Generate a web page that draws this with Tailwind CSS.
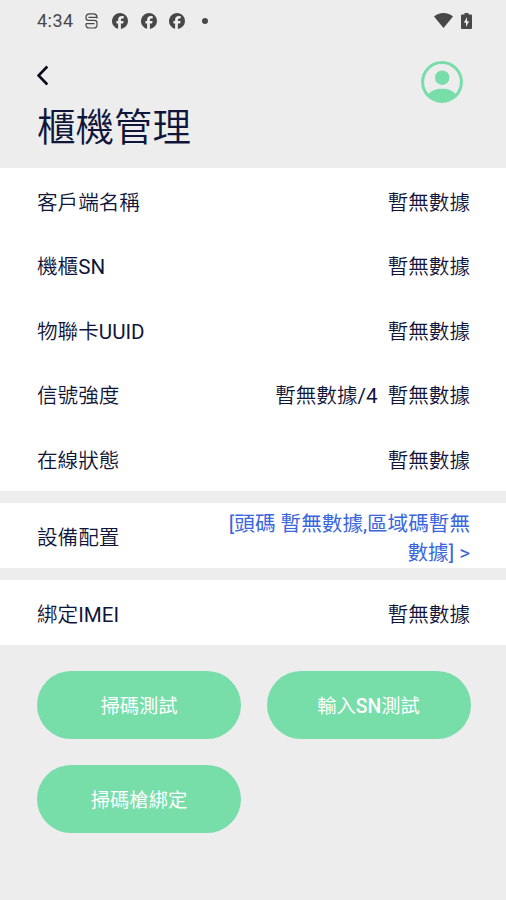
<!DOCTYPE html>
<html lang="zh">
<head>
  <meta charset="UTF-8">
  <meta name="viewport" content="width=device-width, initial-scale=1.0">
  <title>櫃機管理</title>
  <script src="https://cdn.jsdelivr.net/npm/@tailwindcss/browser@4"></script>
</head>
<body class="h-[900px] overflow-hidden bg-[#ededed] font-[Roboto,'Noto_Sans_CJK_SC',sans-serif] text-[20.6px] text-[#10153a]">

  <!-- Status bar -->
  <div class="flex h-[41px] items-center justify-between pl-[37px] pr-[34px] text-[#484848]">
    <div class="flex items-center">
      <span class="w-[48px] text-[18px] leading-none tracking-[0.5px]">4:34</span>
      <svg class="h-4 w-[13px]" viewBox="0 0 13 16" fill="none" stroke="currentColor" stroke-width="1.2">
        <path d="M12 5.500V4A3.300 3.300 0 0 0 8.700.9H4.300A3.300 3.300 0 0 0 1 4v.7a2.600 2.600 0 0 0 2.600 2.600h5.800A2.600 2.600 0 0 1 12 9.900v1.800a3.300 3.300 0 0 1-3.300 3.300H4.300A3.300 3.300 0 0 1 1 11.700V10.500" />
        <path d="M3.500 4.300h8.500M1 10.700h8.500" />
      </svg>
      <div class="ml-[14px] flex gap-[12.500px]">
        <svg class="size-4" viewBox="0 0 16 16" fill="currentColor"><path d="M16 8a8 8 0 1 0-9.900 7.800v-5.300H4.400V8h1.700V6.900c0-2.700 1.200-4 3.900-4 .5 0 1.400.1 1.700.2v2.300h-1c-1.300 0-1.800.5-1.800 1.800V8h2.700l-.5 2.500H8.900v5.400A8 8 0 0 0 16 8z" /></svg>
        <svg class="size-4" viewBox="0 0 16 16" fill="currentColor"><path d="M16 8a8 8 0 1 0-9.900 7.800v-5.300H4.400V8h1.700V6.900c0-2.700 1.200-4 3.900-4 .5 0 1.400.1 1.700.2v2.300h-1c-1.300 0-1.800.5-1.800 1.800V8h2.700l-.5 2.500H8.900v5.400A8 8 0 0 0 16 8z" /></svg>
        <svg class="size-4" viewBox="0 0 16 16" fill="currentColor"><path d="M16 8a8 8 0 1 0-9.900 7.800v-5.300H4.400V8h1.700V6.900c0-2.700 1.200-4 3.900-4 .5 0 1.400.1 1.700.2v2.300h-1c-1.300 0-1.800.5-1.800 1.800V8h2.700l-.5 2.500H8.900v5.400A8 8 0 0 0 16 8z" /></svg>
      </div>
      <span class="ml-[17px] size-[6px] rounded-full bg-[#484848]"></span>
    </div>
    <div class="flex items-center gap-[8px]">
      <svg class="h-[15px] w-[19px]" viewBox="0 0 19 15" fill="currentColor"><path d="M9.500 15 0 3.600C2.400 1.400 5.800 0 9.500 0S16.600 1.400 19 3.600z" /></svg>
      <svg class="h-4 w-[11px]" viewBox="0 0 11 16" fill="currentColor"><path fill-rule="evenodd" d="M3.500 0h4v1.500H10a1 1 0 0 1 1 1V15a1 1 0 0 1-1 1H1a1 1 0 0 1-1-1V2.500a1 1 0 0 1 1-1h2.500zM6 4 2.900 9.700H5V14l3.100-5.700H6z" /></svg>
    </div>
  </div>

  <!-- Header -->
  <header class="flex h-[127px] justify-between pl-[37px] pr-[43px]">
    <div>
      <svg class="mt-[24px] h-[21px] w-[12px]" viewBox="0 0 12 21" fill="none" stroke="#080a1a" stroke-width="2.600"><path d="M10.300 1.500 1.600 10.500l8.700 9" /></svg>
      <h1 class="mt-[15px] text-[38.500px] font-[350] leading-[54px]">櫃機管理</h1>
    </div>
    <svg class="mt-[20px] size-[42px]" viewBox="0 0 42 42" fill="#77dda9">
      <circle cx="21" cy="21" r="19.400" fill="none" stroke="#77dda9" stroke-width="3" />
      <circle cx="21.200" cy="16.700" r="7.200" />
      <path d="M7 33.500C10 29.600 15 27.700 21 27.700s11 1.900 14 5.800A19.400 19.400 0 0 1 7 33.500z" />
    </svg>
  </header>

  <!-- Cabinet details -->
  <section class="bg-white font-[350]">
    <div class="flex h-[64.500px] items-center justify-between pl-[37px] pr-[36px] pt-[6px]"><span>客戶端名稱</span><span>暫無數據</span></div>
    <div class="flex h-[64.500px] items-center justify-between pl-[37px] pr-[36px] pt-[6px]"><span>機櫃<span class="font-normal">SN</span></span><span>暫無數據</span></div>
    <div class="flex h-[64.500px] items-center justify-between pl-[37px] pr-[36px] pt-[6px]"><span>物聯卡<span class="font-normal">UUID</span></span><span>暫無數據</span></div>
    <div class="flex h-[64.500px] items-center justify-between pl-[37px] pr-[36px] pt-[6px]">
      <span>信號強度</span>
      <span class="flex gap-[10px]"><span>暫無數據<span class="font-normal">/4</span></span><span>暫無數據</span></span>
    </div>
    <div class="flex h-[64.500px] items-center justify-between pl-[37px] pr-[36px] pt-[6px]"><span>在線狀態</span><span>暫無數據</span></div>
  </section>

  <section class="mt-[12.500px] flex h-[65px] items-center justify-between bg-white pl-[37px] pr-[36px] pt-[6px] font-[350]">
    <span>設備配置</span>
    <a href="#" class="w-[250px] text-right font-normal leading-[29px] text-[#3a66de]">[頭碼 暫無數據,區域碼暫無數據] &gt;</a>
  </section>

  <section class="mt-[12px] flex h-[65px] items-center justify-between bg-white pl-[37px] pr-[36px] pt-[6px] font-[350]">
    <span>綁定<span class="font-normal">IMEI</span></span>
    <span>暫無數據</span>
  </section>

  <!-- Actions -->
  <div class="mt-[25.500px] grid grid-cols-[204px_204px] gap-x-[25.500px] gap-y-[26px] px-[37px] text-[19.300px] text-white">
    <button class="h-[68px] rounded-full bg-[#77dda9] pt-[5px]">掃碼測試</button>
    <button class="h-[68px] rounded-full bg-[#77dda9] pt-[5px]">輸入<span class="font-medium">SN</span>測試</button>
    <button class="h-[68px] rounded-full bg-[#77dda9] pt-[5px]">掃碼槍綁定</button>
  </div>
</body>
</html>
